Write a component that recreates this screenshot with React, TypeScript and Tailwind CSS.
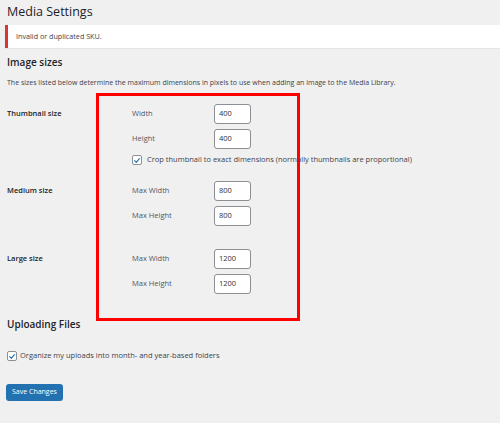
import React from 'react'

const font = "font-['Segoe_UI','Open_Sans',sans-serif]"

function Check() {
  return (
    <span className="flex h-[10px] w-[10px] shrink-0 items-center justify-center rounded-[2px] border border-[#8c8f94] bg-white">
      <svg viewBox="0 0 10 10" className="h-[9px] w-[9px]">
        <path d="M2 5.2 L4.1 7.3 L8 2.6" fill="none" stroke="#2271b1" strokeWidth="1.4" strokeLinecap="round" strokeLinejoin="round" />
      </svg>
    </span>
  )
}

function Field({ label, value }: { label: string; value: string }) {
  return (
    <div className="flex h-[25px] items-center">
      <span className="w-[82px] text-[#50575e]">{label}</span>
      <div className="flex h-[20px] w-[37px] items-center rounded-[3px] border border-[#8c8f94] bg-white pl-[4px] text-[#2c3338]">
        {value}
      </div>
    </div>
  )
}

function SizeRow({ title, children }: { title: string; children: React.ReactNode }) {
  return (
    <div className="flex">
      <div className="flex h-[25px] w-[125px] items-center font-semibold text-[#1d2327]">{title}</div>
      <div className="flex flex-col">{children}</div>
    </div>
  )
}

export default function App() {
  return (
    <div className={`${font} relative min-h-[423px] w-[500px] overflow-hidden bg-[#f0f0f1] text-[7.5px] text-[#3c434a]`}>
      <div className="pl-[7px]">
        <h1 className="flex h-[25px] items-center text-[12.5px] text-[#1d2327]">Media Settings</h1>

        <div className="-ml-[2px] flex h-[23px] items-center border-l-[3px] border-[#d63638] bg-white pl-[8px] text-[7.2px] text-[#3c434a] shadow-[0_1px_1px_rgba(0,0,0,0.04)]">
          Invalid or duplicated SKU.
        </div>

        <h2 className="mt-[6px] flex h-[16px] items-center text-[10px] font-semibold text-[#1d2327]">Image sizes</h2>
        <p className="mt-[6px] flex h-[14px] items-center text-[7px]">
          The sizes listed below determine the maximum dimensions in pixels to use when adding an image to the Media Library.
        </p>

        <div className="mt-[11px]">
          <SizeRow title="Thumbnail size">
            <Field label="Width" value="400" />
            <Field label="Height" value="400" />
            <label className="flex h-[18px] items-center gap-[5px]">
              <Check />
              <span>Crop thumbnail to exact dimensions (normally thumbnails are proportional)</span>
            </label>
          </SizeRow>
          <div className="mt-[9px]">
            <SizeRow title="Medium size">
              <Field label="Max Width" value="800" />
              <Field label="Max Height" value="800" />
            </SizeRow>
          </div>
          <div className="mt-[18px]">
            <SizeRow title="Large size">
              <Field label="Max Width" value="1200" />
              <Field label="Max Height" value="1200" />
            </SizeRow>
          </div>
        </div>

        <h2 className="mt-[20px] flex h-[16px] items-center text-[10px] font-semibold text-[#1d2327]">Uploading Files</h2>
        <label className="mt-[17px] flex h-[14px] items-center gap-[3px]">
          <Check />
          <span>Organize my uploads into month- and year-based folders</span>
        </label>

        <button className="-ml-[1px] mt-[21px] flex h-[17px] items-center rounded-[3px] bg-[#2271b1] px-[6px] text-[7px] text-white">
          Save Changes
        </button>
      </div>

      {/* highlight frame over the image size fields */}
      <div className="pointer-events-none absolute left-[96px] top-[93px] h-[228px] w-[204px] border-[3px] border-[#ff0000]" />
    </div>
  )
}
